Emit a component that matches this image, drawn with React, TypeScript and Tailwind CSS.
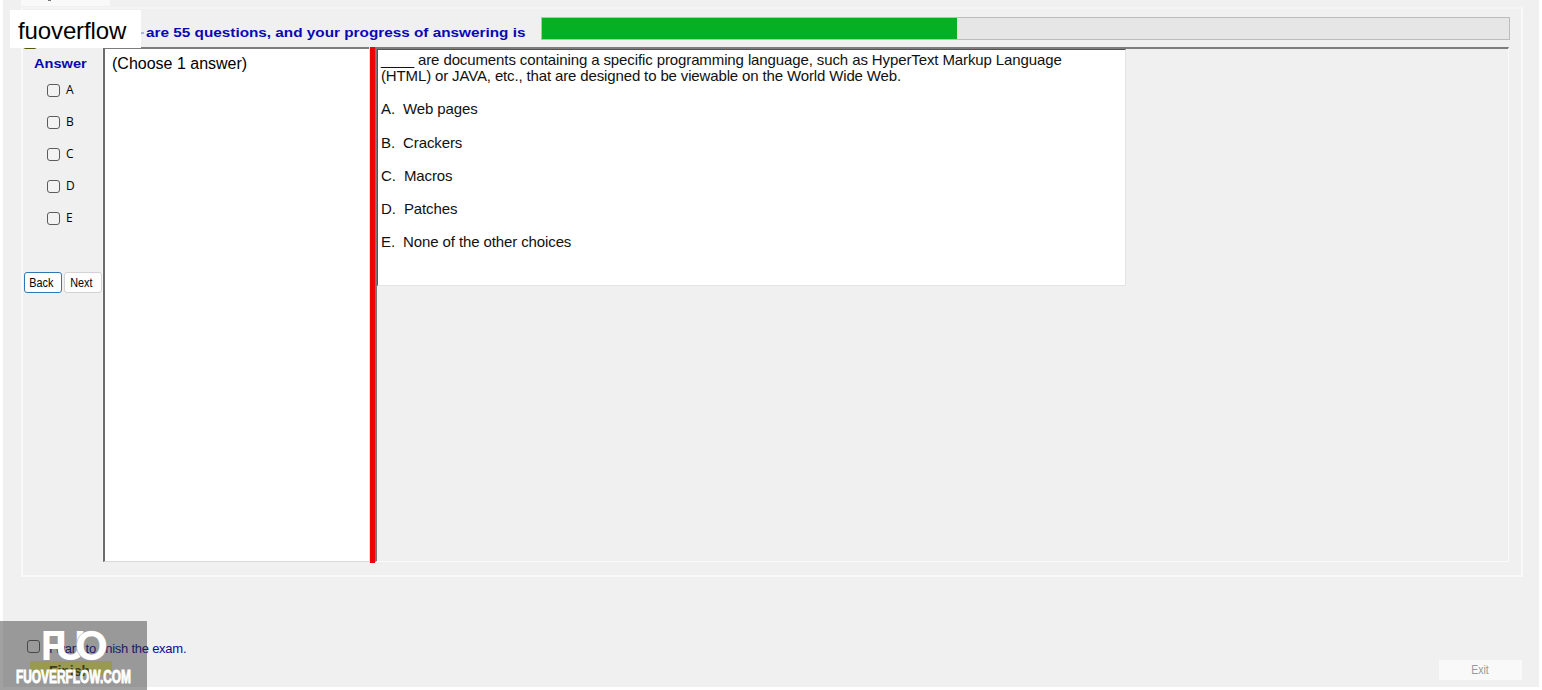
import { useState } from 'react';
import clsx from 'clsx';

const TOTAL_QUESTIONS = 55;
const PROGRESS = 42.9;

const LETTERS = ['A', 'B', 'C', 'D', 'E'];

const CHOICES = [
  { id: 'A', text: 'Web pages' },
  { id: 'B', text: 'Crackers' },
  { id: 'C', text: 'Macros' },
  { id: 'D', text: 'Patches' },
  { id: 'E', text: 'None of the other choices' },
];

function CheckBox({ checked, onChange }: { checked: boolean; onChange: () => void }) {
  return (
    <input
      type="checkbox"
      checked={checked}
      onChange={onChange}
      className="block h-[13px] w-[13px] shrink-0 appearance-none rounded-[3px] border border-[#5c5c5c] bg-[#f3f3f3] checked:bg-[#0067c0]"
    />
  );
}

function Watermark() {
  return (
    <div className="absolute bottom-0 left-0 h-[69px] w-[147px] bg-[#2f2f2f]/45">
      <svg width="147" height="69" viewBox="0 0 147 69" fill="#fff">
        <g fontFamily="Inter, sans-serif" fontWeight="700" fontSize="40">
          <text x="41" y="39" textLength="23" lengthAdjust="spacingAndGlyphs">F</text>
          <text x="55" y="39" textLength="31" lengthAdjust="spacingAndGlyphs">U</text>
          <text x="75" y="39" textLength="33" lengthAdjust="spacingAndGlyphs" stroke="#a8a8a8" strokeWidth="1" paintOrder="stroke">O</text>
        </g>
        <text
          x="16"
          y="62"
          textLength="115"
          lengthAdjust="spacingAndGlyphs"
          fontFamily="'Liberation Sans', sans-serif"
          fontWeight="700"
          fontSize="17.5"
          stroke="#fff"
          strokeWidth="0.9"
        >
          FUOVERFLOW.COM
        </text>
      </svg>
    </div>
  );
}

export default function App() {
  const [answers, setAnswers] = useState<string[]>([]);
  const [finish, setFinish] = useState(false);

  const toggle = (letter: string) => {
    setAnswers(prev => (prev.includes(letter) ? prev.filter(l => l !== letter) : [...prev, letter]));
  };

  return (
    <div className="relative h-[690px] w-[1542px] overflow-hidden bg-white pl-[3px] font-['Liberation_Sans',Arial,sans-serif] text-black">
      <div className="flex h-[687px] w-[1536px] flex-col bg-[#f0f0f0]">
        {/* Tab strip */}
        <div className="flex h-[7px] shrink-0 pl-[18px]">
          <div className="h-[6px] w-[89px] bg-[#f9f9f9] pl-[27px]">
            <div className="h-px w-[3px] bg-[#777]" />
          </div>
        </div>

        {/* Tab page */}
        <div className="ml-[18px] h-[570px] w-[1502px] shrink-0 border-2 border-[#f9f9f9] border-t-[#f4f4f4]">
          {/* Progress header */}
          <div className="flex h-[38px] pl-[123px]">
            <div className="w-[397px] pt-4">
              <p className="w-[340px] origin-left scale-x-[1.134] whitespace-nowrap text-[13.5px] leading-4 font-bold text-[#0808b4]">
                are {TOTAL_QUESTIONS} questions, and your progress of answering is
              </p>
            </div>
            <div className="mt-2 -ml-[2px] h-[23px] w-[969px] border border-[#bcbcbc] bg-[#e6e6e6]">
              <div className="h-[21px] bg-[#06b025]" style={{ width: `${PROGRESS}%` }} />
            </div>
          </div>

          <div className="flex h-[516px]">
            {/* Answer column */}
            <div className="flex w-[80px] flex-col border-r border-[#f6f6f6]">
              <h2 className="mt-[9px] ml-[11px] w-[50px] origin-left scale-x-[1.08] text-[13.5px] leading-4 font-bold text-[#0808b4]">Answer</h2>
              <div className="mt-3 ml-6 flex flex-col gap-[19px]">
                {LETTERS.map(l => (
                  <label key={l} className="flex h-[13px] items-center gap-[6px] font-['Open_Sans',sans-serif] text-[12px]">
                    <CheckBox checked={answers.includes(l)} onChange={() => toggle(l)} />
                    <span className="pb-[2px] leading-3">{l}</span>
                  </label>
                ))}
              </div>
              <div className="mt-[47px] ml-px flex gap-[2px] text-[12px]">
                {['Back', 'Next'].map(label => (
                  <button
                    key={label}
                    className={clsx(
                      'h-[21px] w-[38px] shrink-0 rounded-[3px] border bg-[#fdfdfd] pr-[3px] leading-4',
                      label === 'Back' ? 'border-[#2f78b5]' : 'border-[#d3d3d3]',
                    )}
                  >
                    <span className="inline-block scale-x-[0.9]">{label}</span>
                  </button>
                ))}
              </div>
            </div>

            {/* Hint panel */}
            <div className="h-[515px] w-[266px] border-t-2 border-b border-l-2 border-t-[#7c7c7c] border-b-[#d9d9d9] border-l-[#6b6b6b] bg-white pt-[5px] pl-[7px]">
              <p className="text-[16px] leading-5">(Choose 1 answer)</p>
            </div>

            <div className="h-[516px] w-[6px] border-l border-[#fbd9cc] bg-[#ee0408]" />

            {/* Question panel */}
            <div className="h-[515px] w-[1134px] border-t-2 border-r border-b border-l-2 border-t-[#7c7c7c] border-r-[#fafafa] border-b-[#fafafa] border-l-[#777]">
              <div className="h-[237px] w-[749px] border border-t-[#555] border-r-[#e3e3e3] border-b-[#e3e3e3] border-l-[#555] bg-white pt-[2px] pl-[3px] text-[15px] tracking-[-0.11px] text-[#111]">
                <p className="leading-4">
                  <span className="block whitespace-nowrap">____ are documents containing a specific programming language, such as HyperText Markup Language</span>
                  <span className="block tracking-[-0.14px] whitespace-nowrap">(HTML) or JAVA, etc., that are designed to be viewable on the World Wide Web.</span>
                </p>
                <ul className="mt-[17.4px] flex flex-col gap-[17.25px]">
                  {CHOICES.map(c => (
                    <li key={c.id} className="leading-4 whitespace-pre">{`${c.id}.  ${c.text}`}</li>
                  ))}
                </ul>
              </div>
            </div>
          </div>
        </div>

        {/* Footer */}
        <div className="flex flex-1 justify-between pr-[17px] pl-6">
          <div className="pt-[60px]">
            <label className="flex items-start gap-[9px] text-[13px] leading-4 tracking-[-0.25px] text-[#0c0c9c]">
              <span className="pt-[3px]">
                <CheckBox checked={finish} onChange={() => setFinish(!finish)} />
              </span>
              <span className="pt-1 whitespace-nowrap">I want to finish the exam.</span>
            </label>
            <button className="mt-1 ml-[3px] block h-[14px] w-[82px] bg-[#f2f06c] text-[14px] leading-[20px] font-bold text-[#4a4a10]">
              <span className="-ml-[3px]">Finish</span>
            </button>
          </div>
          <button disabled className="mt-[83px] h-[20px] w-[83px] bg-[#f9f9f9] text-[12px] leading-4 text-[#9a9a9a]">
            <span className="-ml-px inline-block scale-x-[0.88]">Exit</span>
          </button>
        </div>
      </div>

      {/* Name label over the header */}
      <div className="absolute top-[46px] left-[23px] h-[3px] w-[14px] rounded-b-full bg-[#55550a]" />
      <div className="absolute top-[10px] left-[10px] h-[38px] w-[131px] bg-white pt-[7px] pl-2 text-[24px] leading-7 tracking-[-0.12px]">fuoverflow</div>
      <div className="absolute top-[32px] left-[141px] h-[2px] w-[3px] bg-[#aab4d8]" />

      <Watermark />
    </div>
  );
}
